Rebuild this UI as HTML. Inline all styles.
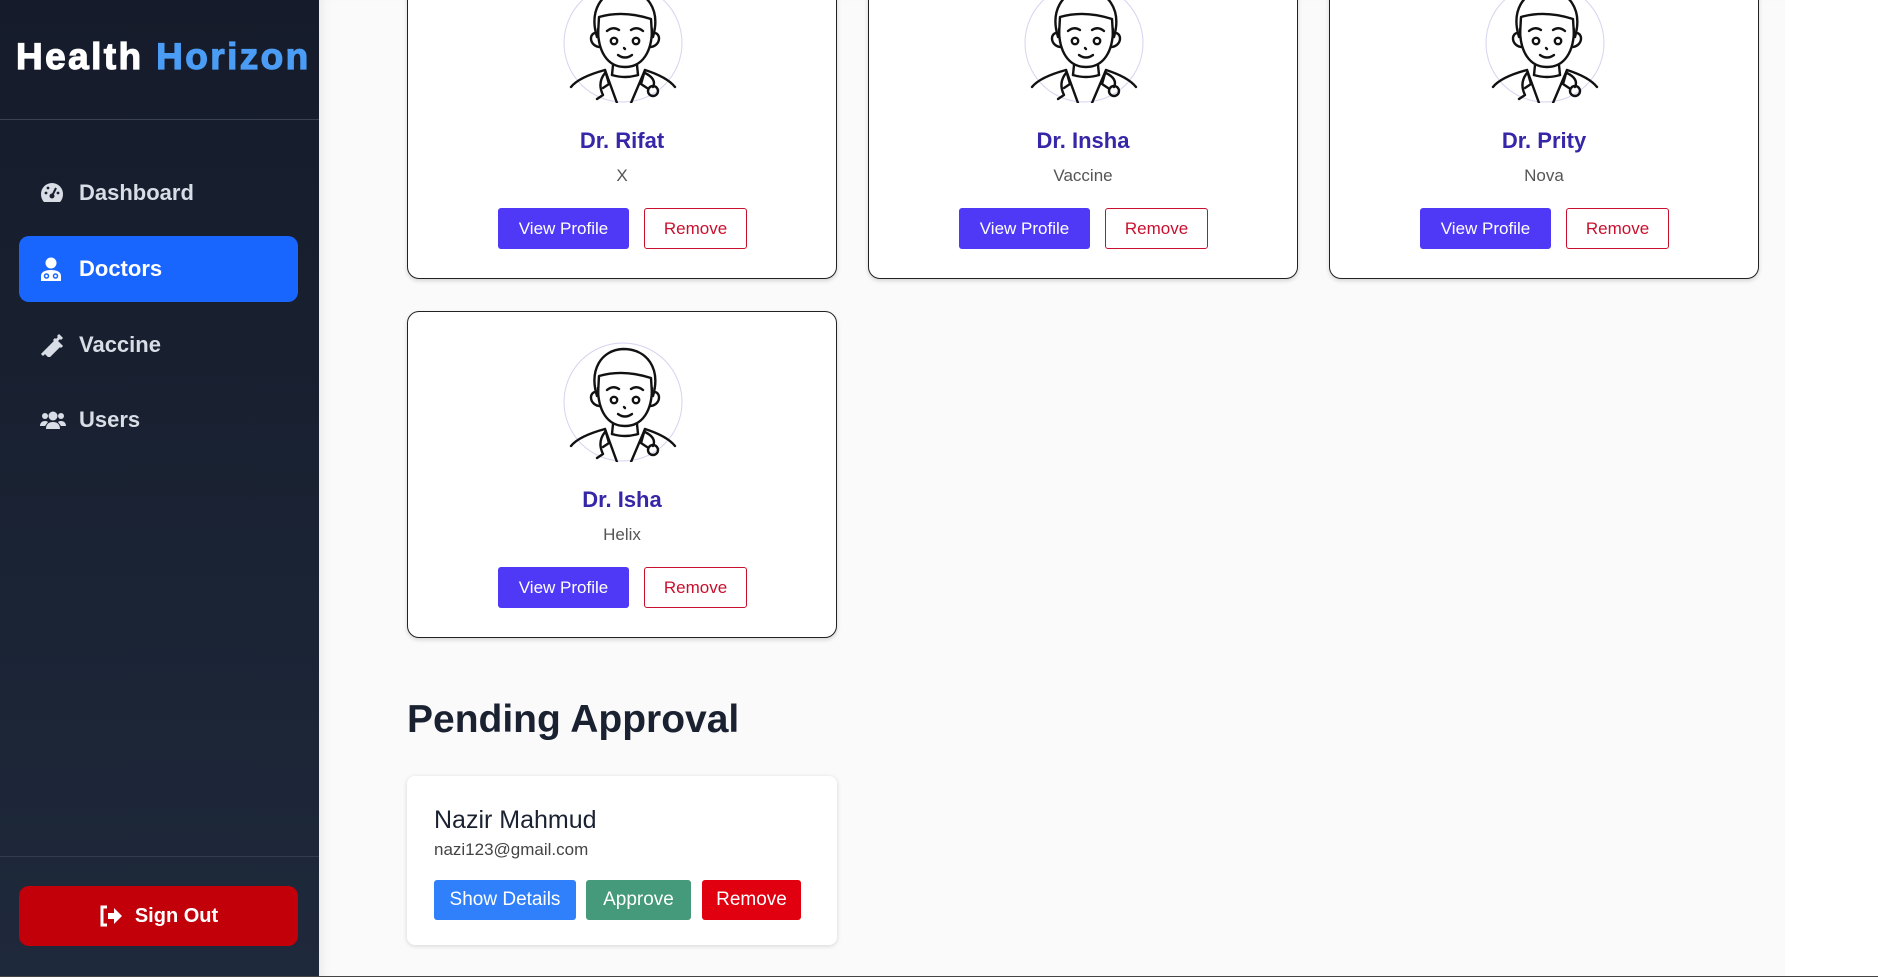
<!DOCTYPE html>
<html><head><meta charset="utf-8"><style>
*{margin:0;padding:0;box-sizing:border-box}
body{width:1878px;height:977px;overflow:hidden;font-family:"Liberation Sans",sans-serif;background:#fff;position:relative}
.side{position:absolute;left:0;top:0;width:319px;height:977px;background:linear-gradient(#151b2a,#1e293b)}
.logo{position:absolute;left:16px;top:36px;font-size:37px;font-weight:bold;color:#fff;letter-spacing:2.4px;white-space:nowrap;-webkit-text-stroke:1.2px #fff}
.logo span{color:#4a9cf5;-webkit-text-stroke:1.2px #4a9cf5}
.hr1{position:absolute;left:0;top:119px;width:319px;height:1px;background:#3a4252}
.hr2{position:absolute;left:0;top:856px;width:319px;height:1px;background:#333c4c}
.nav{position:absolute;left:19px;width:279px;height:66px;border-radius:10px;color:#d8dde6;font-size:22px;font-weight:bold;display:flex;align-items:center}
.nav svg{position:absolute;left:21px}
.nav b{position:absolute;left:60px}
.act{background:#1966ff;color:#fff}
.so{position:absolute;left:19px;top:886px;width:279px;height:60px;border-radius:10px;background:#c20009;color:#fff;font-size:20px;font-weight:bold;display:flex;align-items:center;justify-content:center;gap:12px}
.main{position:absolute;left:319px;top:0;width:1466px;height:977px;background:#fafafa;box-shadow:inset 10px 0 12px -8px rgba(0,0,0,.08)}
.card{position:absolute;width:430px;height:327px;border:1.5px solid #222;border-radius:12px;background:#fff;box-shadow:0 2px 4px rgba(0,0,0,.15)}
.av{position:absolute;left:155px;top:30px;width:120px;height:120px}
.nm{position:absolute;top:175px;width:100%;text-align:center;font-size:22px;font-weight:bold;color:#3626a8}
.sp{position:absolute;top:213px;width:100%;text-align:center;font-size:17px;color:#555}
.vp{position:absolute;left:90px;top:255px;width:131px;height:41px;background:#4f39f6;color:#fff;border-radius:3px;font-size:17px;display:flex;align-items:center;justify-content:center}
.rm{position:absolute;left:236px;top:255px;width:103px;height:41px;border:1.5px solid #c8102e;color:#c8102e;border-radius:3px;font-size:17px;display:flex;align-items:center;justify-content:center}
h2{position:absolute;left:407px;top:698px;font-size:39px;font-weight:bold;color:#1a2232}
.pc{position:absolute;left:407px;top:776px;width:430px;height:169px;background:#fff;border-radius:8px;box-shadow:0 1px 5px rgba(0,0,0,.15)}
.pn{position:absolute;left:27px;top:30px;font-size:25px;color:#1a2232}
.pe{position:absolute;left:27px;top:64px;font-size:17px;color:#444}
.b{position:absolute;top:104px;height:40px;border-radius:3px;color:#fff;font-size:19px;display:flex;align-items:center;justify-content:center}
.bl{position:absolute;left:0;top:976px;width:1878px;height:1px;background:#444}
</style></head><body>
<svg width="0" height="0" style="position:absolute"><defs>
<g id="doc" fill="none" stroke="#111" stroke-width="2.4" stroke-linecap="round" stroke-linejoin="round">
<circle cx="60" cy="60" r="59" stroke="#d4d4ef" stroke-width="1"/>
<path d="M34 54 C26 28 38 8 60 7 C84 7 98 26 90 54"/>
<path d="M35 52 L36 34 Q60 27 88 36 L89 52"/>
<path d="M35 46 C35 68 44 84 62 84 C80 84 89 68 89 46"/>
<path d="M35 50 C26 48 25 62 36 64 M89 50 C98 48 99 62 88 64"/>
<circle cx="51" cy="58" r="3.2"/><circle cx="73" cy="58" r="3.2"/>
<path d="M44 48 Q50 43 56 47 M68 47 Q74 43 80 48"/>
<path d="M55 72 Q62 77 69 72 M61 65 L62 66"/>
<path d="M50 82 L49 92 M74 82 L75 92"/>
<path d="M8 104 Q16 94 42 87 L54 120 M112 104 Q104 94 82 87 L68 120"/>
<path d="M42 87 L46 101 L40 105 M82 87 L78 101 L84 105"/>
<path d="M49 92 Q62 96 75 92"/>
<path d="M42 90 Q34 100 40 112 L34 116 M82 90 Q94 96 90 104"/>
<circle cx="90" cy="108" r="5"/>
</g></defs></svg>
<div class="side">
<div class="logo">Health <span>Horizon</span></div>
<div class="hr1"></div>
<div class="nav" style="top:160px"><svg width="24" height="22" viewBox="0 0 24 22"><path d="M12 1A11 11 0 0 0 1 12c0 3 1 6 3 8h16c2-2 3-5 3-8A11 11 0 0 0 12 1z" fill="#d8dde6"/><circle cx="12" cy="14" r="2.5" fill="#1a2030"/><path d="M12 14 L16 6" stroke="#1a2030" stroke-width="2"/><circle cx="6" cy="11" r="1.4" fill="#1a2030"/><circle cx="8" cy="6" r="1.4" fill="#1a2030"/><circle cx="18" cy="11" r="1.4" fill="#1a2030"/></svg><b>Dashboard</b></div>
<div class="nav act" style="top:236px"><svg width="22" height="24" viewBox="0 0 22 24"><circle cx="11" cy="6" r="5.5" fill="#fff"/><path d="M1 24v-5c0-4 4-6 10-6s10 2 10 6v5z" fill="#fff"/><circle cx="6.5" cy="19" r="2" fill="none" stroke="#1966ff" stroke-width="1.5"/><circle cx="15.5" cy="19" r="2" fill="none" stroke="#1966ff" stroke-width="1.5"/></svg><b>Doctors</b></div>
<div class="nav" style="top:312px"><svg width="24" height="24" viewBox="0 0 24 24"><path d="M2 22 L7 17 M5 19 L15 9 L19 13 L9 23 Z M14 6 L22 14 M18 2 L22 6 M20 4 L17 7" stroke="#d8dde6" stroke-width="3" fill="#d8dde6"/></svg><b>Vaccine</b></div>
<div class="nav" style="top:387px"><svg width="26" height="20" viewBox="0 0 26 20"><circle cx="13" cy="6" r="4.5" fill="#d8dde6"/><circle cx="5" cy="6" r="3" fill="#d8dde6"/><circle cx="21" cy="6" r="3" fill="#d8dde6"/><path d="M6 19c0-5 3-7 7-7s7 2 7 7z M0 16c0-3 2-5 5-5 2 0 3 1 3 1l-3 4z M26 16c0-3-2-5-5-5-2 0-3 1-3 1l3 4z" fill="#d8dde6"/></svg><b>Users</b></div>
<div class="hr2"></div>
<div class="so"><svg width="24" height="22" viewBox="0 0 24 22"><path d="M8 2H3v18h5" stroke="#fff" stroke-width="3" fill="none"/><path d="M9 8h6V3l8 8-8 8v-5H9z" fill="#fff"/></svg>Sign Out</div>
</div>
<div class="main"></div>
<div class="card" style="left:407px;top:-48px"><svg class="av" viewBox="0 0 120 120"><use href="#doc"/></svg><div class="nm">Dr. Rifat</div><div class="sp">X</div><div class="vp">View Profile</div><div class="rm">Remove</div></div>
<div class="card" style="left:868px;top:-48px"><svg class="av" viewBox="0 0 120 120"><use href="#doc"/></svg><div class="nm">Dr. Insha</div><div class="sp">Vaccine</div><div class="vp">View Profile</div><div class="rm">Remove</div></div>
<div class="card" style="left:1329px;top:-48px"><svg class="av" viewBox="0 0 120 120"><use href="#doc"/></svg><div class="nm">Dr. Prity</div><div class="sp">Nova</div><div class="vp">View Profile</div><div class="rm">Remove</div></div>
<div class="card" style="left:407px;top:311px"><svg class="av" viewBox="0 0 120 120"><use href="#doc"/></svg><div class="nm">Dr. Isha</div><div class="sp">Helix</div><div class="vp">View Profile</div><div class="rm">Remove</div></div>
<h2>Pending Approval</h2>
<div class="pc"><div class="pn">Nazir Mahmud</div><div class="pe">nazi123@gmail.com</div>
<div class="b" style="left:27px;width:142px;background:#2f80fa">Show Details</div>
<div class="b" style="left:179px;width:105px;background:#459a7b">Approve</div>
<div class="b" style="left:295px;width:99px;background:#e00010">Remove</div></div>
<div class="bl"></div>
</body></html>
